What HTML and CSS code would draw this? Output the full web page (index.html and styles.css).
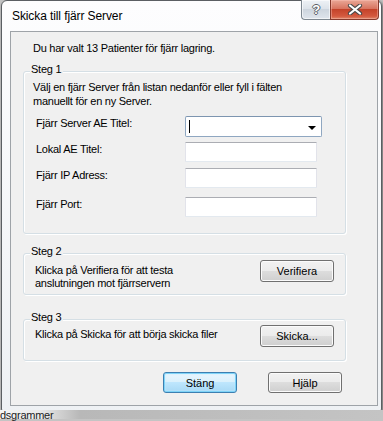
FILE: index.html
```html
<!DOCTYPE html>
<html>
  <head>
    <title>Skicka till fjärr Server</title>
    <link rel="stylesheet" href="styles.css">
  </head>
  <body>
    <div class="window">
      <div class="titlebar">
        <span class="title">Skicka till fjärr Server</span>
        <div class="caption-buttons">
          <div class="cap-btn help"><span>?</span></div>
          <div class="cap-btn close">
            <svg width="16" height="11" viewBox="0 0 16 11">
              <path d="M3 1.5 L13 9.5 M13 1.5 L3 9.5" stroke="#4a4a4a" stroke-width="4.2" stroke-linecap="round" fill="none"/>
              <path d="M3 1.5 L13 9.5 M13 1.5 L3 9.5" stroke="#ffffff" stroke-width="2.2" stroke-linecap="round" fill="none"/>
            </svg>
          </div>
        </div>
      </div>

      <div class="client">
        <p class="intro">Du har valt 13 Patienter för fjärr lagring.</p>

        <div class="group step1">
          <span class="legend">Steg 1</span>
          <p class="desc">Välj en fjärr Server från listan nedanför eller fyll i fälten<br>manuellt för en ny Server.</p>
          <div class="field first">
            <label>Fjärr Server AE Titel:</label>
            <div class="combo"><span class="caret"></span><span class="arrow"></span></div>
          </div>
          <div class="field second">
            <label>Lokal AE Titel:</label>
            <input type="text" class="textbox">
          </div>
          <div class="field third">
            <label>Fjärr IP Adress:</label>
            <input type="text" class="textbox">
          </div>
          <div class="field fourth">
            <label>Fjärr Port:</label>
            <input type="text" class="textbox">
          </div>
        </div>

        <div class="group step2">
          <span class="legend">Steg 2</span>
          <p class="step-text">Klicka på Verifiera för att testa<br>anslutningen mot fjärrservern</p>
          <button class="button">Verifiera</button>
        </div>

        <div class="group step3">
          <span class="legend">Steg 3</span>
          <p class="step-text">Klicka på Skicka för att börja skicka filer</p>
          <button class="button">Skicka...</button>
        </div>

        <div class="actions">
          <button class="button default">Stäng</button>
          <button class="button">Hjälp</button>
        </div>
      </div>
    </div>
    <div class="behind">dsgrammer</div>
  </body>
</html>
```

FILE: styles.css
```css
* {
  box-sizing: border-box;
}

body {
  margin: 0;
  width: 383px;
  height: 421px;
  overflow: hidden;
  background: #c4c4c4;
  font-family: "Liberation Sans", Arial, sans-serif;
  font-size: 11px;
  letter-spacing: -0.25px;
  color: #000;
}

p {
  margin: 0;
}

.window {
  margin-left: 1px;
  width: 381px;
  height: 412px;
  padding: 0 3px 0 8px;
  border: 1px solid #5b5f63;
  border-radius: 6px 6px 3px 3px;
  background: linear-gradient(#fdfdfe, #eef1f4);
  box-shadow: 1px 1px 3px rgba(0, 0, 0, 0.5);
  display: flex;
  flex-direction: column;
}

.titlebar {
  height: 30px;
  display: flex;
  justify-content: space-between;
}

.title {
  margin: 7px 0 0 2px;
  font-size: 12px;
  line-height: 16px;
  letter-spacing: -0.1px;
}

.caption-buttons {
  display: flex;
  margin: -1px -1px 0 0;
}

.cap-btn {
  height: 20px;
  display: flex;
  align-items: center;
  justify-content: center;
  border: 1px solid #7d8790;
  border-top: none;
}

.help {
  width: 29px;
  border-right: none;
  border-radius: 0 0 0 4px;
  background: linear-gradient(#eef2f6, #dde3ea 45%, #cdd5de 50%, #dfe5ec);
  box-shadow: inset 0 0 0 1px rgba(255, 255, 255, 0.6);
}

.help span {
  font-size: 13px;
  font-weight: bold;
  color: #fff;
  text-shadow: 1px 0 0 #5a5f66, -1px 0 0 #5a5f66, 0 1px 0 #5a5f66, 0 -1px 0 #5a5f66;
}

.close {
  width: 49px;
  border-color: #86392c;
  border-radius: 0 0 4px 0;
  background: linear-gradient(#eaa897, #d87560 45%, #c4432a 50%, #d4593f 85%, #e08a6c);
  box-shadow: inset 0 0 0 1px rgba(255, 200, 190, 0.4);
}

.client {
  height: 375px;
  border: 1px solid #9ea3a8;
  background: #f0f0f0;
  display: flex;
  flex-direction: column;
}

.intro {
  margin: 9px 0 0 22px;
  line-height: 14px;
}

.group {
  position: relative;
  margin-left: 12px;
  width: 323px;
  border: 1px solid #d5dfe5;
  border-radius: 3px;
  box-shadow: inset 1px 1px 0 #fff, 1px 1px 0 #fff;
}

.legend {
  position: absolute;
  top: -9px;
  left: 6px;
  padding: 0 2px 0 1px;
  line-height: 13px;
  background: #f0f0f0;
}

.step1 {
  margin-top: 16px;
  height: 163px;
  padding: 8px 0 0 9px;
}

.desc {
  line-height: 14px;
}

.field {
  display: flex;
  align-items: flex-start;
  padding-left: 3px;
}

.field label {
  width: 149px;
  line-height: 14px;
}

.field.first {
  margin-top: 8px;
}

.field.second {
  margin-top: 5px;
}

.field.third {
  margin-top: 6px;
}

.field.fourth {
  margin-top: 9px;
}

.textbox {
  width: 132px;
  height: 20px;
  margin: 0;
  padding: 0 3px;
  font: inherit;
  background: #fff;
  border: 1px solid #e2e3ea;
  border-top-color: #abadb3;
  border-bottom-color: #e3e9ef;
  border-radius: 1px;
  outline: none;
}

.combo {
  position: relative;
  width: 137px;
  height: 21px;
  background: #fff;
  border: 1px solid #8fa7c1;
  border-top-color: #7d95b0;
  border-radius: 2px;
}

.caret {
  position: absolute;
  left: 3px;
  top: 3px;
  width: 1px;
  height: 13px;
  background: #000;
}

.arrow {
  position: absolute;
  right: 5px;
  top: 9px;
  width: 0;
  height: 0;
  border-left: 4px solid transparent;
  border-right: 4px solid transparent;
  border-top: 4px solid #000;
}

.step2,
.step3 {
  height: 42px;
  display: flex;
  align-items: flex-start;
  padding: 6px 11px 0 11px;
}

.step2 {
  margin-top: 19px;
}

.step3 {
  margin-top: 24px;
  padding-top: 5px;
}

.step-text {
  line-height: 13px;
  margin-top: 4px;
}

.step3 .step-text {
  margin-top: 3px;
}

.button {
  width: 74px;
  height: 22px;
  margin: 0;
  padding: 0;
  font: inherit;
  color: #000;
  border: 1px solid #707070;
  border-radius: 3px;
  background: linear-gradient(#f2f2f2, #ebebeb 50%, #dddddd 50%, #cfcfcf);
  box-shadow: inset 0 0 0 1px #fbfbfb;
}

.group .button {
  margin-left: auto;
}

.actions {
  margin-top: 11px;
  padding-right: 35px;
  display: flex;
  justify-content: flex-end;
  gap: 31px;
}

.actions .button {
  height: 21px;
}

.button.default {
  border-color: #3c7fb1;
  background: linear-gradient(#eaf6fd, #d9f0fc 50%, #bee6fd 50%, #a7d9f5);
  box-shadow: inset 0 0 0 1px #7fd4f8, inset 0 0 2px 1px #c6ecfd;
}

.behind {
  height: 9px;
  margin-top: -2px;
  line-height: 10px;
  font-size: 11px;
  color: #222;
  background: linear-gradient(90deg, #f6f6f6, #e9e9e9 40px, #b8b8b8 80px, #c4c4c4);
}
```
